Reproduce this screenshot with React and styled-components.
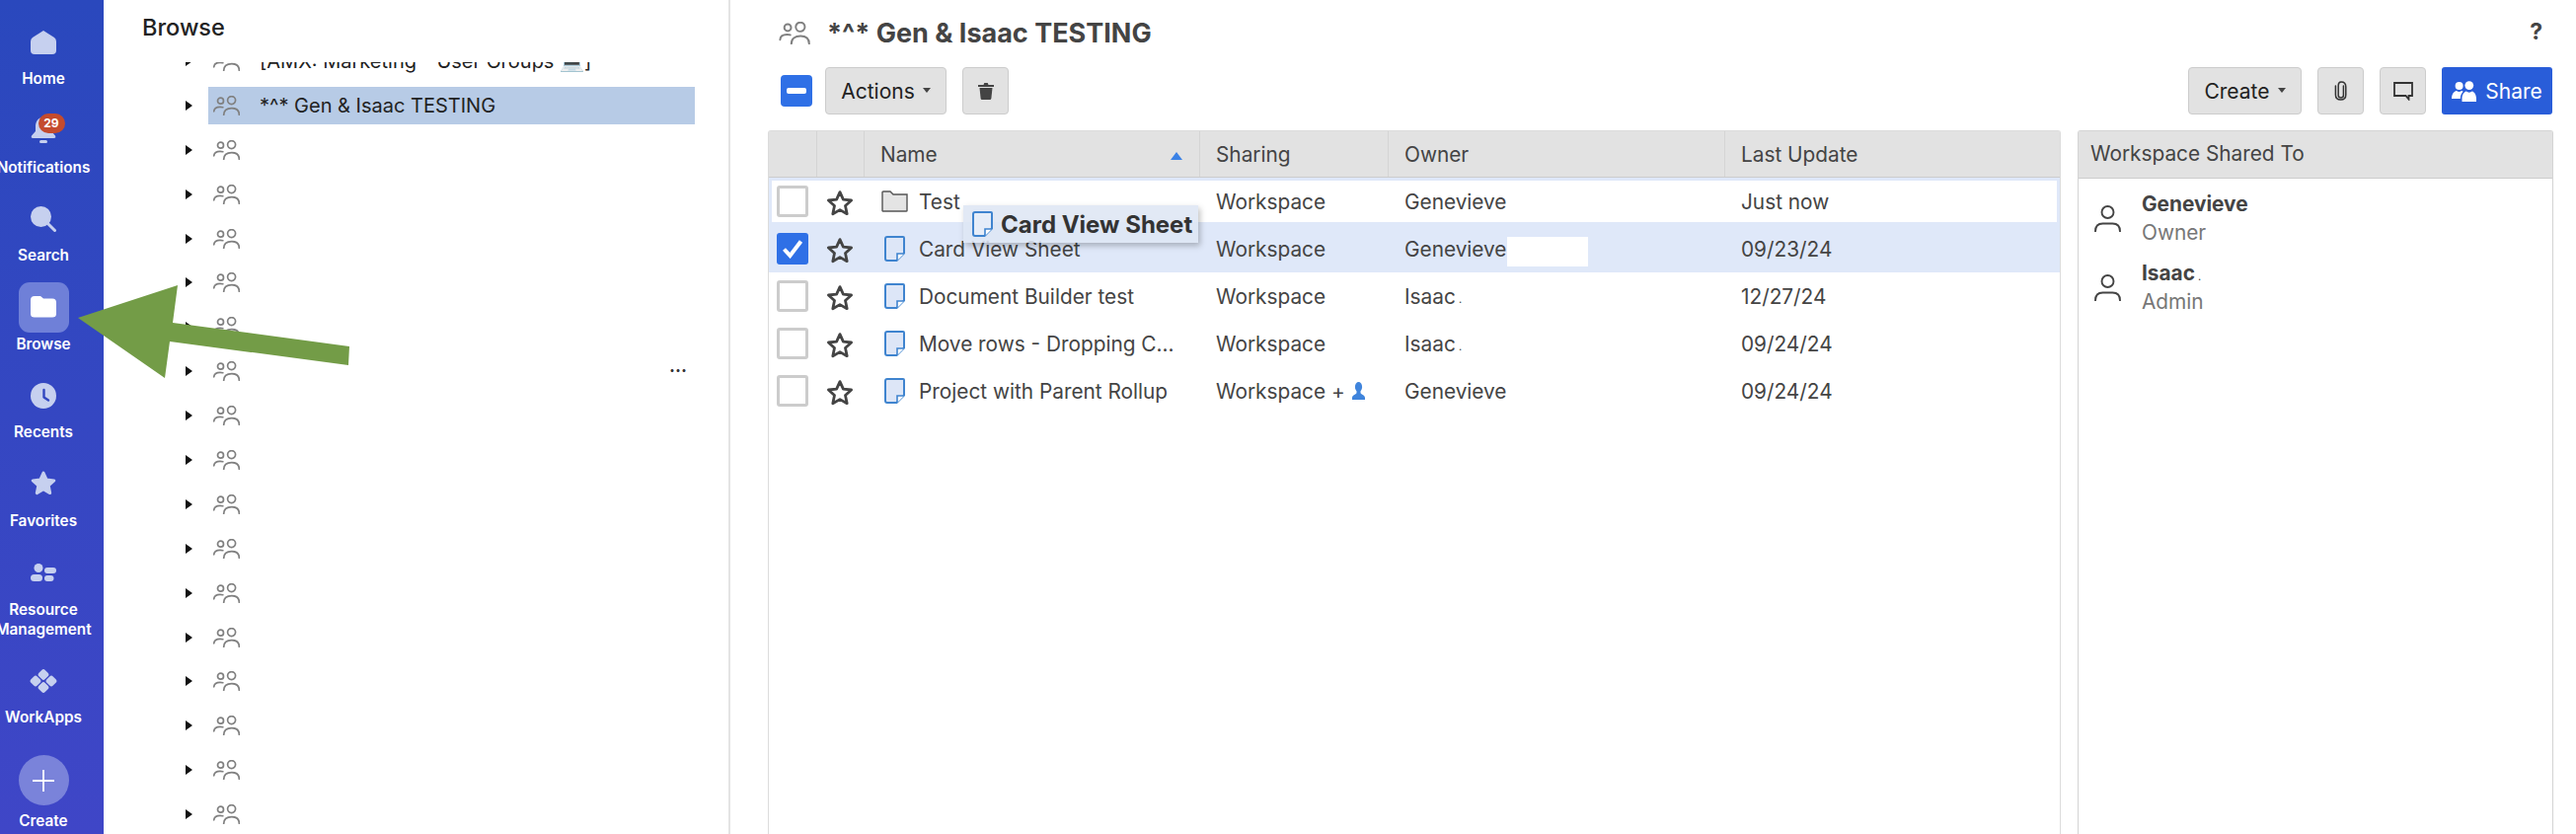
import React from "react";
import styled, { createGlobalStyle } from "styled-components";

const GlobalStyle = createGlobalStyle`
  html, body {
    margin: 0;
    padding: 0;
    height: 100%;
    overflow: hidden;
    background: #fff;
    font-family: Inter, "Liberation Sans", sans-serif;
  }
  #root { height: 100%; }
`;

const ICON = "#c6d0ef";

const HomeIcon = () => (
  <svg width="26" height="24" viewBox="0 0 26 24">
    <path d="M13 0 L24 7 Q26 8.5 26 11 V20 Q26 24 22 24 H4 Q0 24 0 20 V11 Q0 8.5 2 7 Z" fill={ICON} />
  </svg>
);
const BellIcon = () => (
  <svg width="26" height="28" viewBox="0 0 26 28">
    <path d="M13 1 C7 1 5 6 5 10 V15 L1 19.5 Q0 22 2.5 22 H23.5 Q26 22 25 19.5 L21 15 V10 C21 6 19 1 13 1 Z" fill={ICON} />
    <rect x="9" y="24" width="8" height="3" rx="1.5" fill={ICON} />
  </svg>
);
const SearchIcon = () => (
  <svg width="26" height="26" viewBox="0 0 26 26">
    <circle cx="10.5" cy="10.5" r="10.5" fill={ICON} />
    <path d="M17 17 L24.5 24.5" stroke={ICON} strokeWidth="3" strokeLinecap="round" />
  </svg>
);
const FolderIcon = () => (
  <svg width="26" height="22" viewBox="0 0 26 22">
    <path d="M4 0 H10 L13 2.5 H22 Q26 2.5 26 6.5 V18 Q26 21.5 22 21.5 H4 Q0 21.5 0 18 V4 Q0 0 4 0 Z" fill="#fff" />
  </svg>
);
const ClockIcon = () => (
  <svg width="26" height="26" viewBox="0 0 26 26">
    <circle cx="13" cy="13" r="13" fill={ICON} />
    <path d="M13.5 7 V14.5 L18 17.5" stroke="#3247c0" strokeWidth="2.4" fill="none" strokeLinecap="round" strokeLinejoin="round" />
  </svg>
);
const StarFillIcon = () => (
  <svg width="26" height="26" viewBox="0 0 26 26">
    <path d="M13 2 L16.2 9 L23.8 9.9 L18.2 15 L19.7 22.6 L13 18.8 L6.3 22.6 L7.8 15 L2.2 9.9 L9.8 9 Z" fill={ICON} stroke={ICON} strokeWidth="3" strokeLinejoin="round" />
  </svg>
);
const ResourceIcon = () => (
  <svg width="26" height="18" viewBox="0 0 26 18">
    <circle cx="8" cy="4.5" r="4.5" fill={ICON} />
    <rect x="0" y="11" width="12" height="7" rx="3.5" fill={ICON} />
    <rect x="14" y="4" width="12" height="6" rx="3" fill={ICON} />
    <rect x="14" y="12" width="9.5" height="6" rx="3" fill={ICON} />
  </svg>
);
const AppsIcon = () => (
  <svg width="28" height="24" viewBox="0 0 28 24">
    <rect x="9.5" y="1" width="9" height="9" rx="2.5" transform="rotate(45 14 5.5)" fill={ICON} />
    <rect x="1.5" y="7.5" width="9" height="9" rx="2.5" transform="rotate(45 6 12)" fill={ICON} />
    <rect x="17.5" y="7.5" width="9" height="9" rx="2.5" transform="rotate(45 22 12)" fill={ICON} />
    <rect x="9.5" y="14" width="9" height="9" rx="2.5" transform="rotate(45 14 18.5)" fill={ICON} />
  </svg>
);
const PlusIcon = () => (
  <svg width="24" height="24" viewBox="0 0 24 24">
    <path d="M12 1 V23 M1 12 H23" stroke="#fff" strokeWidth="1.8" />
  </svg>
);

const GroupIcon = ({ w = 27, h = 20 }) => (
  <svg width={w} height={h} viewBox="0 0 27 20" fill="none" stroke="#808080" strokeWidth="1.7">
    <circle cx="7.5" cy="5.2" r="3" />
    <circle cx="18.6" cy="4.6" r="4" />
    <path d="M10.7 19.5 C10.7 15 14 12.6 18.8 12.6 C23.4 12.6 26.4 15 26.4 19.5" strokeLinecap="round" />
    <path d="M0.8 15.8 C0.9 12.8 3.6 11.3 7 11.3 C8 11.3 9 11.4 9.8 11.7" strokeLinecap="round" />
  </svg>
);

const StarIcon = () => (
  <svg width="28" height="28" viewBox="0 0 28 28">
    <path d="M14 2.6 L17.4 10.1 L25.6 11 L19.5 16.5 L21.2 24.7 L14 20.6 L6.8 24.7 L8.5 16.5 L2.4 11 L10.6 10.1 Z" fill="none" stroke="#444" strokeWidth="2.8" strokeLinejoin="round" />
  </svg>
);

const SheetIcon = ({ w = 21, h = 26, fill = "#dde6f7" }) => (
  <svg width={w} height={h} viewBox="0 0 21 26">
    <path d="M3 1 H19 Q20 1 20 2 V17.5 L12.5 25 H3 Q1 25 1 23 V3 Q1 1 3 1 Z" fill={fill} stroke="#3f84cf" strokeWidth="2" strokeLinejoin="round" />
    <path d="M20 18 H13 V25" fill="#fff" stroke="#3f84cf" strokeWidth="1.6" />
  </svg>
);

const GrayFolderIcon = () => (
  <svg width="27" height="22" viewBox="0 0 27 22">
    <path d="M1 20.5 V2 Q1 1 2 1 H9 L12 4 H26 V20.5 Q26 21 25 21 H2 Q1 21 1 20.5 Z" fill="#e4e4e4" stroke="#555" strokeWidth="1.4" />
  </svg>
);

const TrashIcon = () => (
  <svg width="16" height="18" viewBox="0 0 16 18">
    <path d="M0 3 H5.5 L6.3 1 H9.7 L10.5 3 H16 V5 H0 Z" fill="#444" />
    <path d="M1.5 6 H14.5 L13.4 16.5 Q13.2 18 12 18 H4 Q2.8 18 2.6 16.5 Z" fill="#444" />
  </svg>
);

const ClipIcon = () => (
  <svg width="13" height="20" viewBox="0 0 13 20" fill="none" stroke="#333" strokeWidth="1.5" strokeLinecap="round">
    <path d="M9.4 5 V14.5 C9.4 16.2 8.2 17 6.8 17 C5.2 17 4.2 16 4.2 14.5 V4.4 C4.2 2.5 5.2 1 7 1 C9.8 1 11.8 3 11.8 6 V14 C11.8 17 9.8 19 6.6 19 C3.4 19 1.4 17 1.4 14 V5" />
  </svg>
);

const CommentIcon = () => (
  <svg width="20" height="19" viewBox="0 0 20 19" fill="none" stroke="#333" strokeWidth="1.8">
    <path d="M1 1 H19 V14 H15.5 V17.5 L12.5 14 H1 Z" strokeLinejoin="miter" />
  </svg>
);

const UsersFillIcon = () => (
  <svg width="25" height="21" viewBox="0 0 25 21" fill="#fff">
    <circle cx="7.6" cy="5" r="4" />
    <circle cx="17.8" cy="4.6" r="4.4" />
    <path d="M0 18 C0 13 2.5 10.5 5 10 C6.5 11.3 8.5 11.3 10 10 C10.6 10.1 11.2 10.4 11.6 10.8 C10 12.5 8.8 15 8.8 18 Z" />
    <path d="M10.5 21 V18 C10.5 14 12.5 11.3 14.8 10.6 C16.6 12 19 12 20.8 10.6 C23 11.3 25 14 25 18 V21 Z" />
  </svg>
);

const PersonFill = () => (
  <svg width="13" height="18" viewBox="0 0 13 18" fill="#3f84dc">
    <ellipse cx="6.5" cy="5" rx="3.6" ry="5" />
    <path d="M4.5 9 H8.5 V11 C8.5 12.5 13 13 13 16 V18 H0 V16 C0 13 4.5 12.5 4.5 11 Z" />
  </svg>
);

const PersonIcon = () => (
  <svg width="27" height="27" viewBox="0 0 27 27" fill="none" stroke="#444" strokeWidth="1.9">
    <circle cx="13.5" cy="7" r="6" />
    <path d="M1 26.5 C1 20.5 4.5 18.5 8.5 18.5 H18.5 C22.5 18.5 26 20.5 26 26.5" strokeLinecap="round" />
  </svg>
);

const navItems = [
  { label: ["Home"], icon: <HomeIcon /> },
  { label: ["Notifications"], icon: <BellIcon />, badge: "29" },
  { label: ["Search"], icon: <SearchIcon /> },
  { label: ["Browse"], icon: <FolderIcon />, active: true },
  { label: ["Recents"], icon: <ClockIcon /> },
  { label: ["Favorites"], icon: <StarFillIcon /> },
  { label: ["Resource", "Management"], icon: <ResourceIcon /> },
  { label: ["WorkApps"], icon: <AppsIcon /> },
];

const files = [
  { name: "Test", kind: "folder", sharing: "Workspace", owner: "Genevieve", date: "Just now", drop: true },
  { name: "Card View Sheet", kind: "sheet", sharing: "Workspace", owner: "Genevieve", date: "09/23/24", selected: true },
  { name: "Document Builder test", kind: "sheet", sharing: "Workspace", owner: "Isaac", dot: true, date: "12/27/24" },
  { name: "Move rows - Dropping C...", kind: "sheet", sharing: "Workspace", owner: "Isaac", dot: true, date: "09/24/24" },
  { name: "Project with Parent Rollup", kind: "sheet", sharing: "Workspace +", extra: true, owner: "Genevieve", date: "09/24/24" },
];

const treeRows = Array.from({ length: 18 }, (_, i) => i);

export default function App() {
  return (
    <Page>
      <GlobalStyle />
      <Sidebar>
        {navItems.map((item) => (
          <NavItem key={item.label[0]}>
            <NavTile $active={item.active}>
              {item.icon}
              {item.badge && <Badge>{item.badge}</Badge>}
            </NavTile>
            {item.label.map((line) => (
              <NavLabel key={line}>{line}</NavLabel>
            ))}
          </NavItem>
        ))}
        <CreateItem>
          <CreateCircle>
            <PlusIcon />
          </CreateCircle>
          <NavLabel>Create</NavLabel>
        </CreateItem>
      </Sidebar>

      <TreePanel>
        <TreeTitle>Browse</TreeTitle>
        <TreeScroll>
          <TreeList>
            {treeRows.map((i) => (
              <TreeRow key={i}>
                <Caret />
                <TreeCell $selected={i === 1}>
                  <GroupIcon />
                  <TreeText>
                    {i === 0 && "[AMX: Marketing - User Groups 💻]"}
                    {i === 1 && "*^* Gen & Isaac TESTING"}
                  </TreeText>
                  {i === 7 && <RowMore>...</RowMore>}
                </TreeCell>
              </TreeRow>
            ))}
          </TreeList>
        </TreeScroll>
      </TreePanel>

      <Main>
        <TitleBar>
          <GroupIcon w={32} h={23} />
          <Title>*^* Gen &amp; Isaac TESTING</Title>
          <Help>?</Help>
        </TitleBar>

        <Toolbar>
          <MinusBox />
          <GrayButton $w={123}>
            Actions <SmallCaret />
          </GrayButton>
          <GrayButton $w={47}>
            <TrashIcon />
          </GrayButton>
          <ToolbarRight>
            <GrayButton $w={115}>
              Create <SmallCaret />
            </GrayButton>
            <GrayButton $w={47}>
              <ClipIcon />
            </GrayButton>
            <GrayButton $w={47}>
              <CommentIcon />
            </GrayButton>
            <ShareButton>
              <UsersFillIcon />
              Share
            </ShareButton>
          </ToolbarRight>
        </Toolbar>

        <Columns>
          <Table>
            <HeaderRow>
              <HeadCell />
              <HeadCell />
              <HeadCell>
                Name
                <SortArrow />
              </HeadCell>
              <HeadCell>Sharing</HeadCell>
              <HeadCell>Owner</HeadCell>
              <HeadCell $last>Last Update</HeadCell>
            </HeaderRow>
            {files.map((f) => (
              <FileRow key={f.name} $selected={f.selected} $drop={f.drop}>
                <CheckCell>
                  <CheckBox $checked={f.selected}>
                    {f.selected && (
                      <svg width="22" height="20" viewBox="0 0 22 20">
                        <path d="M2.5 10.5 L8.5 17 L19.5 2.5" fill="none" stroke="#fff" strokeWidth="4" />
                      </svg>
                    )}
                  </CheckBox>
                </CheckCell>
                <StarCell>
                  <StarIcon />
                </StarCell>
                <NameCell>
                  <NameIcon>{f.kind === "folder" ? <GrayFolderIcon /> : <SheetIcon />}</NameIcon>
                  {f.name}
                </NameCell>
                <TextCell>
                  {f.sharing}
                  {f.extra && (
                    <ExtraPerson>
                      <PersonFill />
                    </ExtraPerson>
                  )}
                </TextCell>
                <TextCell>
                  {f.owner}
                  {f.dot && <CellDot> .</CellDot>}
                  {f.selected && <Redaction />}
                </TextCell>
                <TextCell>{f.date}</TextCell>
              </FileRow>
            ))}
            <DragGhost>
              <SheetIcon fill="#e6edf8" />
              Card View Sheet
            </DragGhost>
          </Table>

          <SharePanel>
            <SharePanelHead>Workspace Shared To</SharePanelHead>
            <ShareList>
              <ShareUser>
                <PersonIcon />
                <div>
                  <UserName>Genevieve</UserName>
                  <UserRole>Owner</UserRole>
                </div>
              </ShareUser>
              <ShareUser>
                <PersonIcon />
                <div>
                  <UserName>
                    Isaac<TinyDot> .</TinyDot>
                  </UserName>
                  <UserRole>Admin</UserRole>
                </div>
              </ShareUser>
            </ShareList>
          </SharePanel>
        </Columns>
      </Main>

      <CalloutArrow viewBox="0 0 2610 845" width="2610" height="845">
        <polygon points="79,322 180,289 175,327 354,351 353,370 172,346 167,383" fill="#739c47" />
      </CalloutArrow>
    </Page>
  );
}

const Page = styled.div`
  position: relative;
  display: flex;
  width: 2610px;
  height: 845px;
  overflow: hidden;
  background: #fff;
`;

const Sidebar = styled.nav`
  flex: 0 0 105px;
  width: 105px;
  box-sizing: border-box;
  padding: 17px 17px 0 0;
  overflow: hidden;
  background: linear-gradient(180deg, #2a48bd 0%, #3f46c7 100%);
`;

const NavItem = styled.div`
  display: flex;
  flex-direction: column;
  align-items: center;
  width: 88px;
  margin-bottom: 16.6px;
`;

const NavTile = styled.div`
  position: relative;
  display: flex;
  align-items: center;
  justify-content: center;
  flex: 0 0 51px;
  width: 51px;
  height: 51px;
  margin-bottom: 2px;
  border-radius: 11px;
  background: ${(p) => (p.$active ? "#6f80d8" : "transparent")};
`;

const Badge = styled.span`
  position: absolute;
  left: 20px;
  top: 8px;
  width: 27px;
  height: 20px;
  border-radius: 10px;
  background: #c44b2e;
  color: #fff;
  font-size: 12px;
  font-weight: 700;
  line-height: 20px;
  text-align: center;
`;

const NavLabel = styled.div`
  color: #fff;
  font-size: 15.3px;
  font-weight: 600;
  line-height: 20px;
  white-space: nowrap;
`;

const CreateItem = styled(NavItem)`
  margin: 28px 0 0;
  gap: 6px;
`;

const CreateCircle = styled.div`
  display: flex;
  align-items: center;
  justify-content: center;
  width: 51px;
  height: 51px;
  border-radius: 50%;
  background: #7a83da;
`;

const TreePanel = styled.section`
  flex: 0 0 635px;
  width: 635px;
  box-sizing: border-box;
  display: flex;
  flex-direction: column;
  border-right: 2px solid #e4e4e4;
`;

const TreeTitle = styled.h2`
  flex: 0 0 63px;
  margin: 0;
  padding: 14px 0 0 39px;
  box-sizing: border-box;
  color: #222;
  font-size: 23.5px;
  font-weight: 500;
  line-height: 28px;
`;

const TreeScroll = styled.div`
  flex: 1;
  min-height: 0;
  overflow: hidden;
`;

const TreeList = styled.div`
  margin-top: -23.5px;
  padding-left: 83px;
`;

const TreeRow = styled.div`
  display: flex;
  align-items: center;
  height: 44.9px;
`;

const Caret = styled.span`
  flex: 0 0 auto;
  width: 0;
  height: 0;
  margin-right: 16px;
  border-left: 7px solid #111;
  border-top: 5.5px solid transparent;
  border-bottom: 5.5px solid transparent;
`;

const TreeCell = styled.div`
  position: relative;
  flex: 0 0 493px;
  display: flex;
  align-items: center;
  box-sizing: border-box;
  height: 38px;
  padding-left: 5px;
  background: ${(p) => (p.$selected ? "#b7cbe6" : "transparent")};
`;

const TreeText = styled.span`
  margin-left: 20px;
  color: #222;
  font-size: 20px;
  white-space: nowrap;
`;

const RowMore = styled.span`
  position: absolute;
  right: 8px;
  top: 3px;
  color: #333;
  font-size: 18px;
  font-weight: 700;
`;

const Main = styled.main`
  flex: 1;
  min-width: 0;
  box-sizing: border-box;
  padding: 0 24px 0 38px;
  display: flex;
  flex-direction: column;
`;

const TitleBar = styled.div`
  position: relative;
  display: flex;
  align-items: center;
  gap: 17px;
  height: 68px;
  padding: 0 0 2px 11px;
  box-sizing: border-box;
`;

const Title = styled.h1`
  margin: 0;
  color: #444;
  font-size: 27px;
  font-weight: 700;
  white-space: nowrap;
`;

const Help = styled.span`
  position: absolute;
  right: 10px;
  top: 18px;
  color: #444;
  font-size: 23px;
  font-weight: 700;
`;

const Toolbar = styled.div`
  display: flex;
  align-items: center;
  gap: 16px;
  height: 48px;
  padding-left: 13px;
`;

const ToolbarRight = styled.div`
  display: flex;
  gap: 16px;
  margin-left: auto;
`;

const MinusBox = styled.span`
  position: relative;
  width: 32px;
  height: 32px;
  margin-right: -3px;
  border-radius: 4px;
  background: #2f70e6;
  &::after {
    content: "";
    position: absolute;
    left: 6px;
    right: 6px;
    top: 13px;
    height: 6px;
    border-radius: 2px;
    background: #fff;
  }
`;

const GrayButton = styled.button`
  display: flex;
  align-items: center;
  justify-content: center;
  gap: 8px;
  width: ${(p) => p.$w}px;
  height: 48px;
  padding: 0;
  border: 1px solid #ccc;
  border-radius: 4px;
  background: #e2e2e2;
  color: #222;
  font-family: inherit;
  font-size: 21px;
`;

const SmallCaret = styled.span`
  width: 0;
  height: 0;
  margin-bottom: 2px;
  border-top: 5px solid #444;
  border-left: 4px solid transparent;
  border-right: 4px solid transparent;
`;

const ShareButton = styled.button`
  display: flex;
  align-items: center;
  justify-content: center;
  gap: 9px;
  width: 112px;
  height: 48px;
  padding: 0;
  border: none;
  border-radius: 3px;
  background: #295dd9;
  color: #fff;
  font-family: inherit;
  font-size: 21px;
`;

const Columns = styled.div`
  display: flex;
  gap: 17px;
  flex: 1;
  min-height: 0;
  margin-top: 16px;
`;

const Table = styled.div`
  position: relative;
  flex: 0 0 1310px;
  box-sizing: border-box;
  border: 1px solid #dcdcdc;
  border-bottom: none;
  border-radius: 3px 3px 0 0;
`;

const gridColumns = "49px 48px 340px 191px 341px 1fr";

const HeaderRow = styled.div`
  display: grid;
  grid-template-columns: ${gridColumns};
  height: 46px;
  background: #e2e2e2;
  border-bottom: 1px solid #ccc;
`;

const HeadCell = styled.div`
  position: relative;
  display: flex;
  align-items: center;
  padding: 0 0 0 16px;
  border-right: ${(p) => (p.$last ? "none" : "1px solid #d4d4d4")};
  color: #444;
  font-size: 20.8px;
`;

const SortArrow = styled.span`
  position: absolute;
  right: 17px;
  top: 21px;
  width: 0;
  height: 0;
  border-bottom: 8px solid #3b82e6;
  border-left: 6px solid transparent;
  border-right: 6px solid transparent;
`;

const FileRow = styled.div`
  display: grid;
  grid-template-columns: ${gridColumns};
  align-items: center;
  box-sizing: border-box;
  height: 48px;
  background: ${(p) => (p.$selected ? "#dfe8f9" : "#fff")};
  box-shadow: ${(p) => (p.$drop ? "inset 3px 3px 0 #dfe8f9, inset -3px -3px 0 #dfe8f9" : "none")};
`;

const CheckCell = styled.div`
  display: flex;
  padding-left: 8px;
`;

const CheckBox = styled.span`
  display: flex;
  align-items: center;
  justify-content: center;
  box-sizing: border-box;
  width: 32px;
  height: 32px;
  border: ${(p) => (p.$checked ? "none" : "3px solid #ccc")};
  border-radius: 3px;
  background: ${(p) => (p.$checked ? "#2f70e6" : "#fff")};
`;

const StarCell = styled.div`
  display: flex;
  padding: 4px 0 0 9px;
`;

const NameCell = styled.div`
  display: flex;
  align-items: center;
  padding-left: 17px;
  color: #444;
  font-size: 20.8px;
  white-space: nowrap;
`;

const NameIcon = styled.span`
  display: flex;
  justify-content: center;
  width: 27px;
  margin-right: 11px;
`;

const TextCell = styled.div`
  position: relative;
  display: flex;
  align-items: center;
  padding-left: 16px;
  color: #444;
  font-size: 20.8px;
  white-space: pre;
`;

const ExtraPerson = styled.span`
  display: flex;
  margin-left: 7px;
`;

const TinyDot = styled.span`
  font-size: 11px;
  font-weight: 400;
  line-height: 0;
`;

const CellDot = styled(TinyDot)`
  position: relative;
  top: 3px;
`;

const Redaction = styled.span`
  position: absolute;
  left: 120px;
  top: 0;
  width: 82px;
  height: 30px;
  background: #fff;
`;

const DragGhost = styled.div`
  position: absolute;
  left: 197px;
  top: 75px;
  display: flex;
  align-items: center;
  gap: 8px;
  box-sizing: border-box;
  width: 238px;
  height: 38px;
  padding-left: 9px;
  background: rgba(222, 230, 244, 0.88);
  box-shadow: 2px 3px 6px rgba(0, 0, 0, 0.25);
  color: #333;
  font-size: 24px;
  font-weight: 700;
  white-space: nowrap;
`;

const SharePanel = styled.aside`
  flex: 0 0 482px;
  box-sizing: border-box;
  border: 1px solid #d4d4d4;
  border-bottom: none;
  border-radius: 3px 3px 0 0;
`;

const SharePanelHead = styled.div`
  display: flex;
  align-items: center;
  padding: 0 0 2px 12px;
  box-sizing: border-box;
  height: 48px;
  background: #e2e2e2;
  border-bottom: 1px solid #ccc;
  color: #444;
  font-size: 20.8px;
`;

const ShareList = styled.div`
  display: flex;
  flex-direction: column;
  gap: 13px;
  padding: 12px 0 0 16px;
`;

const ShareUser = styled.div`
  display: flex;
  align-items: center;
  gap: 21px;
`;

const UserName = styled.div`
  color: #444;
  font-size: 20.8px;
  font-weight: 700;
  line-height: 28.5px;
`;

const UserRole = styled.div`
  color: #777;
  font-size: 20.8px;
  line-height: 28.5px;
`;

const CalloutArrow = styled.svg`
  position: absolute;
  left: 0;
  top: 0;
  pointer-events: none;
`;
